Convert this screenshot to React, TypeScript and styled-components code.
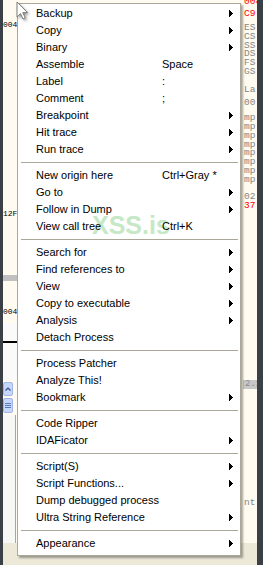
import React from "react";
import styled, { createGlobalStyle } from "styled-components";

const Global = createGlobalStyle`
  html, body { margin: 0; padding: 0; background: #3b3f46; }
  body { width: 263px; height: 565px; overflow: hidden; }
`;

const Page = styled.div`
  position: relative;
  width: 263px;
  height: 565px;
  display: flex;
  background: #3b3f46;
  overflow: hidden;
`;

const Workspace = styled.div`
  margin-left: 3px;
  width: 254px;
  display: flex;
  flex-direction: column;
`;

const Panes = styled.div`
  height: 543px;
  display: flex;
  background: #fffbf0;
`;

const Footer = styled.div`
  flex: 1;
  background: #ece9d8;
`;

const LeftCol = styled.div`
  width: 14px;
  display: flex;
  flex-direction: column;
  overflow: hidden;
`;

const MidCol = styled.div`
  width: 226px;
`;

const RightCol = styled.div`
  width: 14px;
  display: flex;
  flex-direction: column;
  overflow: hidden;
  padding-left: 1px;
  box-sizing: border-box;
`;

const Gap = styled.div<{ $h: number }>`
  height: ${(p) => p.$h}px;
  flex: none;
`;

const CodeText = styled.div<{ $color?: string; $size?: number; $lh?: number; $mt?: number }>`
  font-family: "Liberation Mono", "DejaVu Sans Mono", monospace;
  font-size: ${(p) => p.$size ?? 8}px;
  line-height: ${(p) => p.$lh ?? 9}px;
  margin-top: ${(p) => p.$mt ?? 0}px;
  color: ${(p) => p.$color ?? "#000"};
  white-space: pre;
  flex: none;
`;

const Band = styled.div<{ $h: number; $bg: string }>`
  height: ${(p) => p.$h}px;
  background: ${(p) => p.$bg};
  flex: none;
`;

const PaleSection = styled.div`
  height: 57px;
  background: #fafafa;
  display: flex;
  flex-direction: column;
  flex: none;
`;

const ScrollBtn = styled.div<{ $h: number }>`
  width: 10px;
  height: ${(p) => p.$h}px;
  box-sizing: border-box;
  border: 1px solid #9fb6e6;
  border-radius: 2px;
  background: #c6d7fb;
  display: flex;
  align-items: center;
  justify-content: center;
  flex: none;
`;

const LowerSection = styled.div`
  flex: 1;
  width: 12px;
  border-right: 1px solid #a7a7a7;
  background: #f7f7f5;
`;

const GrayBandText = styled.div`
  height: 9px;
  margin-left: -1px;
  background: #c8c8c8;
  font-family: "Liberation Mono", monospace;
  font-size: 9px;
  line-height: 9px;
  color: #8a8a8a;
  padding-left: 2px;
  flex: none;
`;

/* ---------- menu ---------- */

const Menu = styled.div`
  position: absolute;
  left: 17px;
  top: 3px;
  z-index: 1;
  width: 224px;
  box-sizing: border-box;
  background: #ffffff;
  border: 1px solid #aca899;
  padding: 1px 0 3px 0;
  box-shadow: 2px 2px 2px rgba(0, 0, 0, 0.35);
  display: flex;
  flex-direction: column;
  font-family: "Liberation Sans", Arial, sans-serif;
  font-size: 11px;
  color: #000;
`;

const Row = styled.div`
  height: 17px;
  display: grid;
  grid-template-columns: 126px 1fr 4px;
  align-items: center;
  padding: 0 7px 0 18px;
  white-space: nowrap;
`;

const Label = styled.span`
  line-height: 17px;
`;

const Shortcut = styled.span`
  line-height: 17px;
`;

const Separator = styled.div`
  height: 9px;
  display: flex;
  align-items: center;
  padding: 0 2px 0 3px;
  &::before {
    content: "";
    flex: 1;
    height: 1px;
    background: #aca899;
  }
`;

const Watermark = styled.div`
  position: absolute;
  left: 74px;
  top: 209px;
  z-index: -1;
  font-family: "Liberation Sans", Arial, sans-serif;
  font-weight: bold;
  font-size: 25px;
  line-height: 25px;
  color: #c6e8c6;
  pointer-events: none;
`;

const Cursor = styled.svg`
  position: absolute;
  left: 16px;
  top: 1px;
  z-index: 2;
  overflow: visible;
`;

type Item = { label: string; shortcut?: string; sub?: boolean } | "sep";

const items: Item[] = [
  { label: "Backup", sub: true },
  { label: "Copy", sub: true },
  { label: "Binary", sub: true },
  { label: "Assemble", shortcut: "Space" },
  { label: "Label", shortcut: ":" },
  { label: "Comment", shortcut: ";" },
  { label: "Breakpoint", sub: true },
  { label: "Hit trace", sub: true },
  { label: "Run trace", sub: true },
  "sep",
  { label: "New origin here", shortcut: "Ctrl+Gray *" },
  { label: "Go to", sub: true },
  { label: "Follow in Dump", sub: true },
  { label: "View call tree", shortcut: "Ctrl+K" },
  "sep",
  { label: "Search for", sub: true },
  { label: "Find references to", sub: true },
  { label: "View", sub: true },
  { label: "Copy to executable", sub: true },
  { label: "Analysis", sub: true },
  { label: "Detach Process" },
  "sep",
  { label: "Process Patcher" },
  { label: "Analyze This!" },
  { label: "Bookmark", sub: true },
  "sep",
  { label: "Code Ripper" },
  { label: "IDAFicator", sub: true },
  "sep",
  { label: "Script(S)", sub: true },
  { label: "Script Functions...", sub: true },
  { label: "Dump debugged process" },
  { label: "Ultra String Reference", sub: true },
  "sep",
  { label: "Appearance", sub: true },
];

const SubArrow = () => (
  <svg width="4" height="7" viewBox="0 0 4 7" shapeRendering="crispEdges">
    <rect x="0" y="0" width="1" height="7" fill="#000" />
    <rect x="1" y="1" width="1" height="5" fill="#000" />
    <rect x="2" y="2" width="1" height="3" fill="#000" />
    <rect x="3" y="3" width="1" height="1" fill="#000" />
  </svg>
);

export default function App() {
  return (
    <>
      <Global />
      <Page>
        <Workspace>
          <Panes>
            <LeftCol>
              <Gap $h={20} />
              <CodeText>004</CodeText>
              <Gap $h={180} />
              <CodeText>12F</CodeText>
              <Gap $h={57} />
              <Band $h={6} $bg="#c0c0c0" />
              <Gap $h={26} />
              <CodeText>004</CodeText>
              <Gap $h={7} />
              <PaleSection>
                <Gap $h={18} />
                <Band $h={2} $bg="#000" />
              </PaleSection>
              <Gap $h={2} />
              <ScrollBtn $h={14}>
                <svg width="6" height="4" viewBox="0 0 6 4">
                  <path d="M0.5 3.5 L3 1 L5.5 3.5" stroke="#2b4a8a" strokeWidth="1.2" fill="none" />
                </svg>
              </ScrollBtn>
              <Gap $h={2} />
              <ScrollBtn $h={15}>
                <svg width="6" height="7" viewBox="0 0 6 7">
                  <path d="M0 1.5 H6 M0 3.5 H6 M0 5.5 H6" stroke="#5a78b8" strokeWidth="1" />
                </svg>
              </ScrollBtn>
              <Gap $h={2} />
              <LowerSection />
            </LeftCol>
            <MidCol />
            <RightCol>
              <CodeText $color="#f00" $size={9.5} $mt={-3}>004</CodeText>
              <Gap $h={3} />
              <CodeText $color="#f00" $size={9.5}>C9</CodeText>
              <Gap $h={6} />
              <CodeText $color="#858585" $size={9.5} $lh={8.8}>
                {"ES\nCS\nSS\nDS\nFS\nGS\n\nLa"}
              </CodeText>
              <Gap $h={5} />
              <CodeText $color="#858585" $size={9.5} $lh={8.8}>
                {"00"}
              </CodeText>
              <Gap $h={6} />
              <CodeText $color="#858585" $size={9.5} $lh={8.8}>
                {"mp\nmp\nmp\nmp\nmp\nmp\nmp\nmp\n\n02"}
              </CodeText>
              <CodeText $color="#f00" $size={9.5} $lh={8.8}>
                {"37"}
              </CodeText>
              <Gap $h={169} />
              <GrayBandText>2.1</GrayBandText>
              <Gap $h={109} />
              <CodeText $color="#858585" $size={9.5} $lh={9}>
                {"nt:"}
              </CodeText>
            </RightCol>
          </Panes>
          <Footer />
        </Workspace>

        <Menu>
          <Watermark>XSS.is</Watermark>
          {items.map((it, i) =>
            it === "sep" ? (
              <Separator key={i} />
            ) : (
              <Row key={i}>
                <Label>{it.label}</Label>
                <Shortcut>{it.shortcut ?? ""}</Shortcut>
                {it.sub ? <SubArrow /> : <span />}
              </Row>
            )
          )}
        </Menu>

        <Cursor width="14" height="22" viewBox="0 0 14 22">
          <defs>
            <filter id="cs" x="-50%" y="-50%" width="200%" height="200%">
              <feGaussianBlur stdDeviation="1.4" />
            </filter>
          </defs>
          <path
            d="M2.5 2.5 L2.5 18 L6 14.5 L8.5 20 L11 19 L8.5 13.5 L13.5 13.5 Z"
            fill="rgba(0,0,0,0.45)"
            filter="url(#cs)"
          />
          <path
            d="M1 1 L1 16 L4.5 12.5 L7 18 L9.3 17 L6.8 11.6 L11.5 11.6 Z"
            fill="#fff"
            stroke="#7d7d7d"
            strokeWidth="1"
            strokeLinejoin="round"
          />
        </Cursor>
      </Page>
    </>
  );
}
